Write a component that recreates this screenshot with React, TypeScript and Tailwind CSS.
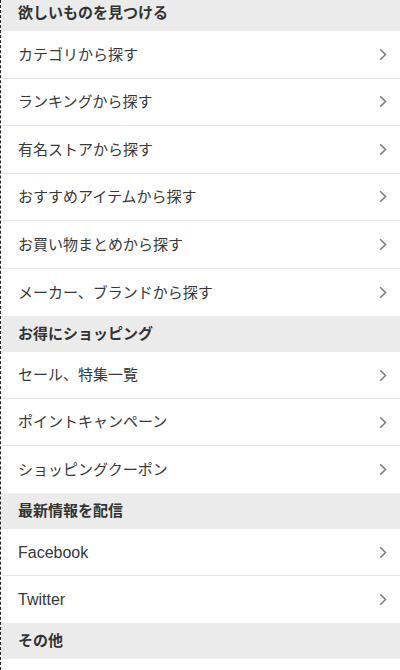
import React from 'react';

interface Section {
  title: string;
  items: string[];
  rowClass: string;
}

const sections: Section[] = [
  {
    title: '欲しいものを見つける',
    rowClass: 'h-[47.5px]',
    items: [
      'カテゴリから探す',
      'ランキングから探す',
      '有名ストアから探す',
      'おすすめアイテムから探す',
      'お買い物まとめから探す',
      'メーカー、ブランドから探す',
    ],
  },
  {
    title: 'お得にショッピング',
    rowClass: 'h-[47px]',
    items: ['セール、特集一覧', 'ポイントキャンペーン', 'ショッピングクーポン'],
  },
  {
    title: '最新情報を配信',
    rowClass: 'h-[47px]',
    items: ['Facebook', 'Twitter'],
  },
  {
    title: 'その他',
    rowClass: 'h-[47px]',
    items: [],
  },
];

const Chevron: React.FC = () => (
  <svg width="8" height="13" viewBox="0 0 8 13" fill="none" className="shrink-0">
    <path d="M1.2 1.2 L6.5 6.5 L1.2 11.8" stroke="#7a7a7a" strokeWidth="1.5" />
  </svg>
);

// latin labels render a touch bigger than the kana ones in the original
const isLatin = (s: string) => /^[A-Za-z ]+$/.test(s);

export default function App() {
  return (
    <div
      className="w-[400px] h-[670px] overflow-hidden bg-white border-l border-dashed border-[#222]"
      style={{ fontFamily: '"Liberation Sans", "Noto Sans CJK JP", sans-serif' }}
    >
      <div className="-mt-[5px]">
        {sections.map((section) => (
          <div key={section.title}>
            <div className="h-9 flex items-center px-[17px] bg-[#ebebeb] text-[15px] font-bold text-[#333]">
              {section.title}
            </div>
            <ul>
              {section.items.map((item, i) => (
                <li
                  key={item}
                  className={`${section.rowClass} flex items-center justify-between pl-[17px] pr-[13px] text-[#383838] ${
                    isLatin(item) ? 'text-[16px]' : 'text-[15px]'
                  } ${i < section.items.length - 1 ? 'border-b border-[#e6e6e6]' : ''}`}
                >
                  <span className="pt-px">{item}</span>
                  <Chevron />
                </li>
              ))}
            </ul>
          </div>
        ))}
      </div>
    </div>
  );
}
